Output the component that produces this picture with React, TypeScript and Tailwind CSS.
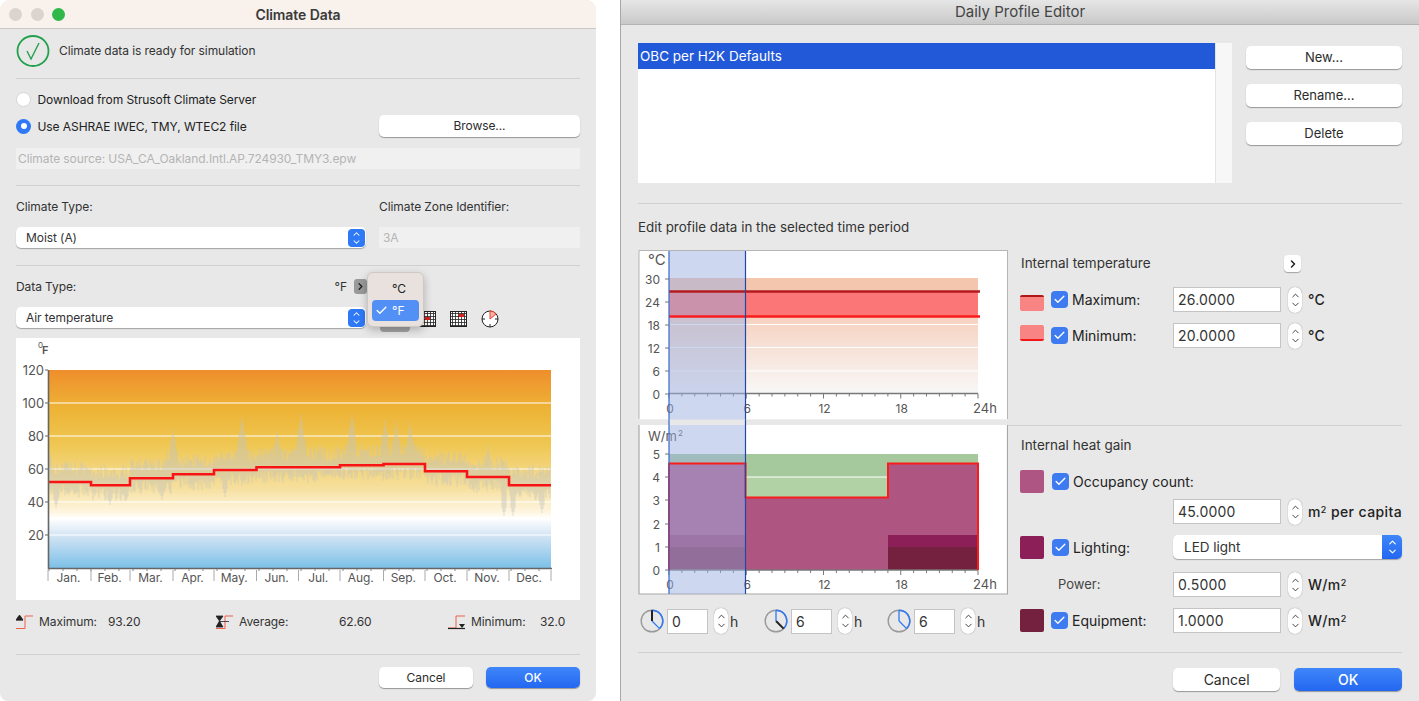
import React from 'react';
import { Check, ChevronRight, ChevronUp, ChevronDown } from 'lucide-react';

const Divider = ({ className = '' }: { className?: string }) => <div className={`h-px bg-[#d0d0d0] ${className}`} />;

const MacButton = ({ label, primary, className = '' }: { label: string; primary?: boolean; className?: string }) => (
  <button
    className={`flex items-center justify-center rounded-[5px] shadow-[0_1px_1px_rgba(0,0,0,0.35)] ${
      primary ? 'bg-gradient-to-b from-[#3f86fa] to-[#2367f0] text-white' : 'bg-white text-[#2b2b2b]'
    } ${className}`}
  >
    {label}
  </button>
);

const Radio = ({ on }: { on?: boolean }) =>
  on ? (
    <span className="flex h-[15px] w-[15px] items-center justify-center rounded-full bg-[#2f78f6]">
      <span className="h-[6px] w-[6px] rounded-full bg-white" />
    </span>
  ) : (
    <span className="h-[15px] w-[15px] rounded-full border border-[#d4d4d4] bg-white" />
  );

const SelectArrow = () => (
  <span className="flex h-[18px] w-[17px] flex-col items-center justify-center rounded-[4px] bg-[#2f78f6] text-white">
    <ChevronUp size={11} strokeWidth={2.5} className="-mb-[1px]" />
    <ChevronDown size={11} strokeWidth={2.5} className="-mt-[1px]" />
  </span>
);

const SmallSelect = ({ label }: { label: string }) => (
  <div className="flex h-[21px] items-center justify-between rounded-[5px] bg-white pl-[10px] pr-[1px] shadow-[0_1px_1px_rgba(0,0,0,0.3)]">
    <span className="text-[12px] text-[#333]">{label}</span>
    <SelectArrow />
  </div>
);

const StatIcon = ({ kind }: { kind: 'max' | 'avg' | 'min' }) => (
  <svg width="23" height="16" viewBox="0 0 23 16" className="shrink-0">
    {kind === 'min' ? (
      <path d="M0 14 H8 V2 H17" fill="none" stroke="#f0604c" strokeWidth="1" />
    ) : (
      <path d="M0 14.5 H9 V2 H17" fill="none" stroke="#f0604c" strokeWidth="1" />
    )}
    {kind === 'max' && <path d="M3 1.5 H4 L7 6 H0 Z M0 6 H7" fill="#222" stroke="#222" strokeWidth="0.8" />}
    {kind === 'avg' && <path d="M0 2 H7 L3.5 7 L7 13 H0 L3.5 7 Z M3 7.5 H13" fill="#222" stroke="#222" strokeWidth="0.8" />}
    {kind === 'min' && (
      <>
        <path d="M0 14.5 H17" stroke="#222" strokeWidth="1.2" />
        <path d="M11 10 H17 L14 14 Z" fill="#222" />
      </>
    )}
  </svg>
);

const Stat = ({ kind, label, value, labelWidth, className }: { kind: 'max' | 'avg' | 'min'; label: string; value: string; labelWidth: string; className: string }) => (
  <div className={`flex items-center text-[12px] text-[#333] ${className}`}>
    <StatIcon kind={kind} />
    <span className={labelWidth}>{label}</span>
    <span>{value}</span>
  </div>
);

const GridIcon = ({ red }: { red: string }) => (
  <svg width="17" height="16" viewBox="0 0 17 16" className="block">
    <rect x="0.5" y="0.5" width="16" height="15" fill="#fff" stroke="#222" />
    {[3, 6, 9, 12, 15].map(v => <path key={v} d={`M0 ${v - 0.5} H17`} stroke="#222" strokeWidth="0.8" />)}
    {[3, 6, 9, 12, 15].map(v => <path key={v} d={`M${v - 0.5} 0 V16`} stroke="#222" strokeWidth="0.8" />)}
    <rect x={red === 'a' ? 9 : 6} y={red === 'a' ? 3 : 6} width="5" height="3" fill="#d82020" />
  </svg>
);

// --- annual temperature chart ---
const monthX = [48, 91, 130, 173, 214, 256.5, 298.5, 340, 383.5, 425, 467, 509, 551];
const monthY = [482, 485.3, 478.3, 474.3, 470, 467.3, 467.3, 465.3, 464, 471.3, 477, 485.3];
const months = ['Jan.', 'Feb.', 'Mar.', 'Apr.', 'May.', 'Jun.', 'Jul.', 'Aug.', 'Sep.', 'Oct.', 'Nov.', 'Dec.'];
const peaksUp = [[173, 429], [242, 417], [301, 414], [352, 414], [385, 420], [396, 422], [410, 422], [277, 432], [488, 445], [320, 445], [167, 452], [50, 452], [140, 460]];
const peaksDown = [[504, 516], [513, 516], [542, 513], [56, 508], [110, 505], [162, 500], [225, 497]];

const noisePath = () => {
  let seed = 1234;
  const rnd = () => {
    seed = (seed * 16807) % 2147483647;
    return seed / 2147483647;
  };
  let d = '';
  for (let x = 49; x < 551; x += 1) {
    const m = monthX.findIndex((v, i) => x >= v && x < monthX[i + 1]);
    const base = monthY[Math.max(m, 0)];
    let top = base - 6 - rnd() * 15;
    let bottom = base + 2 + rnd() * 14;
    peaksUp.forEach(([px, py]) => {
      const k = Math.abs(x - px);
      if (k < 5) top = Math.min(top, py + k * (5 + rnd() * 3));
    });
    peaksDown.forEach(([px, py]) => {
      const k = Math.abs(x - px);
      if (k < 3) bottom = Math.max(bottom, py - k * 4);
    });
    d += `M${x} ${top.toFixed(1)}V${bottom.toFixed(1)}`;
  }
  return d;
};

const stepPath = () =>
  monthY.reduce((d, y, i) => `${d}${i === 0 ? `M49 ${y}` : `V${y}`}H${i === 11 ? 551 : monthX[i + 1]}`, '');

const ClimateChart = () => (
  <svg width="564" height="262" viewBox="16 338 564 262" className="block bg-white">
    <defs>
      <linearGradient id="climate" x1="0" y1="0" x2="0" y2="1">
        <stop offset="0" stopColor="#ef8e2c" />
        <stop offset="0.2" stopColor="#edb436" />
        <stop offset="0.38" stopColor="#efc753" />
        <stop offset="0.6" stopColor="#f6e09f" />
        <stop offset="0.72" stopColor="#fff6e2" />
        <stop offset="0.75" stopColor="#ffffff" />
        <stop offset="0.83" stopColor="#d6e6f4" />
        <stop offset="1" stopColor="#7cc0e8" />
      </linearGradient>
    </defs>
    <rect x="49" y="370" width="502" height="198" fill="url(#climate)" />
    {[403, 436, 469, 502, 535].map(y => <path key={y} d={`M49 ${y} H551`} stroke="#fff" strokeWidth="1.2" />)}
    <path d={noisePath()} stroke="#c6c4c0" strokeWidth="1" opacity="0.55" fill="none" />
    <path d={stepPath()} stroke="#f81414" strokeWidth="2.6" fill="none" />
    <path d="M48.5 370 V568.5 H552" stroke="#666" strokeWidth="1.6" fill="none" />
    {[370, 403, 436, 469, 502, 535].map(y => <path key={y} d={`M45 ${y} H48`} stroke="#666" />)}
    {[['120', 370], ['100', 403], ['80', 436], ['60', 469], ['40', 502], ['20', 535]].map(([t, y]) => (
      <text key={t} x="44" y={Number(y) + 5} textAnchor="end" fontSize="13" fill="#555">{t}</text>
    ))}
    {monthX.map(x => <path key={x} d={`M${x} 570 V581`} stroke="#aaa" />)}
    {monthX.slice(0, 12).map((x, i) => (
      <text key={months[i]} x={(x + monthX[i + 1]) / 2 - 1} y="582" textAnchor="middle" fontSize="12" fill="#555">{months[i]}</text>
    ))}
    {Array.from({ length: 36 }, (_, i) => 49 + i * 14).map(x => <path key={x} d={`M${x} 569 V571`} stroke="#888" />)}
    <text x="38" y="348" fontSize="8" fill="#555">0</text>
    <text x="42" y="354" fontSize="11" fontWeight="600" fill="#555">F</text>
  </svg>
);

// --- daily profile charts ---
const hx = (h: number) => 669 + h * 12.875;

const HourAxis = ({ y }: { y: number }) => (
  <g>
    <path d={`M669 ${y} H978`} stroke="#777" strokeWidth="1.4" />
    {Array.from({ length: 25 }, (_, i) => i).map(h => (
      <path key={h} d={`M${hx(h)} ${y} V${y + (h % 6 === 0 ? 5 : 3)}`} stroke="#777" strokeWidth="1" />
    ))}
    {['0', '6', '12', '18'].map((t, i) => (
      <text key={t} x={hx(i * 6) + 1} y={y + 19} textAnchor="middle" fontSize="12" fill="#555">{t}</text>
    ))}
    <text x="985" y={y + 19} textAnchor="middle" fontSize="13" fill="#555">24h</text>
  </g>
);

const YLabels = ({ items }: { items: [string, number][] }) => (
  <g>
    {items.map(([t, y]) => (
      <g key={t}>
        <text x="660" y={y + 5} textAnchor="end" fontSize="12" fill="#555">{t}</text>
        <path d={`M665 ${y} H669`} stroke="#777" />
      </g>
    ))}
  </g>
);

const ProfileCharts = () => (
  <svg width="370" height="345" viewBox="638 250 370 345" className="block shrink-0">
    <defs>
      <linearGradient id="fade" x1="0" y1="0" x2="0" y2="1">
        <stop offset="0" stopColor="#f6d2c0" />
        <stop offset="1" stopColor="#f8f8f8" />
      </linearGradient>
    </defs>
    {/* temperature frame */}
    <rect x="639" y="250.5" width="368" height="169" fill="#fff" />
    <path d="M639 419 V250.5 H1007.5 V419" fill="none" stroke="#b5b5b5" />
    <rect x="669" y="278" width="309" height="14" fill="#f5c6ae" />
    <rect x="669" y="291" width="309" height="26" fill="#fb7676" />
    <rect x="669" y="317" width="309" height="77" fill="url(#fade)" />
    {[324.5, 347.5, 371].map(y => <path key={y} d={`M669 ${y} H978`} stroke="#fff" strokeWidth="1.2" />)}
    <HourAxis y={393.5} />
    <YLabels items={[['30', 279], ['24', 302], ['18', 325], ['12', 348], ['6', 371], ['0', 394]]} />
    <text x="648" y="265" fontSize="15" fill="#555">°C</text>

    {/* heat gain frame */}
    <rect x="639" y="425" width="368" height="169" fill="#fff" />
    <path d="M639 425 V594 H1007.5 V425" fill="none" stroke="#a8a8a8" strokeWidth="1.2" />
    <rect x="669" y="454" width="309" height="44" fill="#a5c89c" />
    <rect x="746" y="477" width="142" height="21" fill="#b0d2a4" />
    <path d="M746 477 H888" stroke="#fff" strokeWidth="1.2" />
    <path d="M669 463.5 H745.5 V497.5 H888 V463.5 H978 V570 H669 Z" fill="#ae5582" />
    <rect x="669" y="535" width="76" height="35" fill="#8d1f58" opacity="0.45" />
    <rect x="888" y="535" width="90" height="12" fill="#8d1f58" />
    <rect x="888" y="547" width="90" height="23" fill="#74213f" />
    <rect x="669" y="547" width="76" height="23" fill="#74213f" opacity="0.5" />
    <HourAxis y={570} />
    <YLabels items={[['5', 454], ['4', 477], ['3', 500], ['2', 524], ['1', 547], ['0', 570]]} />
    <text x="648" y="441" fontSize="13" fill="#555">W/m</text>
    <text x="678" y="436" fontSize="8" fill="#555">2</text>

    {/* selected period, spans both charts */}
    <rect x="669" y="251" width="76.5" height="343" fill="#9bafdf" opacity="0.5" />
    <path d="M669 291.5 H980" stroke="#b51a1f" strokeWidth="2.4" />
    <path d="M669 316.5 H980" stroke="#fa1c1c" strokeWidth="2.4" />
    <path d="M669 570 V463.5 H745.5 V497.5 H888 V463.5 H978 V570" fill="none" stroke="#f81c1c" strokeWidth="2" />
    <path d="M669 251 V594" stroke="#3a68cc" strokeWidth="1.2" />
    <path d="M745.5 251 V594" stroke="#2147a8" strokeWidth="1.2" />
    <rect x="639" y="419.5" width="369" height="5.5" fill="#e8e8e8" />
    <path d="M669 419.5 V425" stroke="#3a68cc" strokeWidth="1.2" />
    <path d="M745.5 419.5 V425" stroke="#2147a8" strokeWidth="1.2" />
  </svg>
);

const Stepper = () => (
  <span className="flex h-[26px] w-[14px] shrink-0 flex-col items-center justify-center rounded-[7px] bg-white text-[#333] shadow-[0_0_1px_rgba(0,0,0,0.5)]">
    <ChevronUp size={11} strokeWidth={2} className="-mb-[1px]" />
    <ChevronDown size={11} strokeWidth={2} className="-mt-[1px]" />
  </span>
);

const NumInput = ({ value, className = 'w-[108px]' }: { value: string; className?: string }) => (
  <div className={`flex h-[25px] shrink-0 items-center border border-[#c4c4c4] bg-white pl-[4px] text-[14px] tracking-[0.2px] text-[#333] ${className}`}>{value}</div>
);

const CheckBox = () => (
  <span className="flex h-[17px] w-[17px] shrink-0 items-center justify-center rounded-[4px] bg-[#3e7bf0] text-white">
    <Check size={13} strokeWidth={2.5} />
  </span>
);

const Sup2 = () => <sup className="text-[9px]">2</sup>;

const Clock = ({ black }: { black: 'up' | 'down' | 'none' }) => (
  <svg width="24" height="24" viewBox="-12 -12 24 24" className="shrink-0">
    <circle r="10.8" fill="none" stroke="#9a9a9a" strokeWidth="1.4" />
    <path d="M0 -10.8 A10.8 10.8 0 0 1 7.6 7.6" fill="none" stroke="#2f78f6" strokeWidth="1.4" />
    <path d="M0 0 L7.6 7.6" stroke={black === 'down' ? '#222' : '#2f78f6'} strokeWidth={black === 'down' ? 2 : 1.3} />
    <path d="M0 0 V-10.8" stroke={black === 'up' ? '#222' : '#2f78f6'} strokeWidth={black === 'up' ? 2 : 1.3} />
  </svg>
);

const ClockField = ({ black, value, className }: { black: 'up' | 'down' | 'none'; value: string; className: string }) => (
  <div className={`flex items-center ${className}`}>
    <Clock black={black} />
    <NumInput value={value} className="ml-[3px] w-[41px]" />
    <span className="ml-[6px]"><Stepper /></span>
    <span className="ml-[2px] text-[14px] text-[#333]">h</span>
  </div>
);

const Swatch = ({ className }: { className: string }) => <span className={`w-[24px] shrink-0 rounded-[2px] ${className}`} />;

const UNIT = 'ml-[6px] whitespace-nowrap text-[14px] font-medium tracking-[0.4px] text-[#222]';

const ProfileRow = ({ swatch, label, value, unit }: { swatch: React.ReactNode; label: string; value: string; unit: React.ReactNode }) => (
  <div className="flex h-[25px] items-center">
    {swatch}
    <span className="ml-[7px]"><CheckBox /></span>
    <span className="ml-[4px] w-[101px] text-[14px] text-[#222]">{label}</span>
    <NumInput value={value} />
    <span className="ml-[7px]"><Stepper /></span>
    <span className={UNIT}>{unit}</span>
  </div>
);

const ClimateWindow = () => (
  <div className="relative h-[701px] w-[596px] shrink-0 overflow-hidden rounded-t-[10px] rounded-b-[8px] bg-[#e8e8e8] tracking-[-0.08px]">
    <div className="grid h-[29px] grid-cols-[1fr_auto_1fr] items-center border-b border-[#c9c9c9] bg-[#f8f1ec]">
      <div className="flex items-center gap-[8.5px] pl-[9px]">
        <span className="h-[13px] w-[13px] rounded-full bg-[#d9d4cd]" />
        <span className="h-[13px] w-[13px] rounded-full bg-[#d9d4cd]" />
        <span className="h-[13px] w-[13px] rounded-full bg-[#2fb94a]" />
      </div>
      <span className="text-[14px] font-semibold text-[#3a3a3a]">Climate Data</span>
      <span />
    </div>

    <div className="px-4">
      <div className="flex h-[49px] items-start pt-[6px]">
        <svg width="34" height="32" viewBox="0 0 34 32">
          <ellipse cx="17" cy="16" rx="15.5" ry="15" fill="none" stroke="#22a04c" strokeWidth="1.8" />
          <path d="M11 16 L15 24 L23 8" fill="none" stroke="#22a04c" strokeWidth="1.4" />
        </svg>
        <span className="ml-[9px] mt-[7px] text-[12px] text-[#333]">Climate data is ready for simulation</span>
      </div>
      <Divider />

      <div className="mt-[10px] flex h-[21px] items-center gap-[6.5px] text-[12px] text-[#222]">
        <Radio />
        <span>Download from Strusoft Climate Server</span>
      </div>
      <div className="mt-[5px] flex h-[22px] items-center gap-[6.5px] text-[12px] text-[#222]">
        <Radio on />
        <span className="pt-[1px]">Use ASHRAE IWEC, TMY, WTEC2 file</span>
        <MacButton label="Browse..." className="ml-auto h-[22px] w-[201px] text-[12px]" />
      </div>
      <div className="mt-[11px] flex h-[21px] items-center bg-[#f0f0f0] pl-[2px] text-[12px] text-[#b4b4b4]">
        Climate source: USA_CA_Oakland.Intl.AP.724930_TMY3.epw
      </div>
      <Divider className="mt-[16px]" />

      <div className="mt-[13px] grid grid-cols-[350px_201px] gap-x-[13px] text-[12px] text-[#333]">
        <span className="h-4 leading-4">Climate Type:</span>
        <span className="h-4 leading-4">Climate Zone Identifier:</span>
        <div className="mt-[12px]"><SmallSelect label="Moist (A)" /></div>
        <div className="mt-[12px] flex h-[21px] items-center bg-[#f0f0f0] pl-[4px] text-[#b4b4b4]">3A</div>
      </div>
      <Divider className="mt-[17px]" />

      <div className="mt-[13px] w-[351px]">
        <div className="flex h-[15px] items-center text-[12px] text-[#333]">
          <span>Data Type:</span>
          <span className="ml-auto mr-[7px]">°F</span>
          <span className="flex h-[15px] w-[13px] items-center justify-center rounded-[3px] bg-[#9a9a9a] text-[#222]">
            <ChevronRight size={11} strokeWidth={3} />
          </span>
        </div>
      </div>
      <div className="mt-[13px] flex h-[21px]">
        <div className="w-[350px]"><SmallSelect label="Air temperature" /></div>
        <div className="flex h-[21px] items-center gap-[13px] pl-[84px] pt-[2px]">
          <GridIcon red="a" />
          <svg width="20" height="20" viewBox="-10 -10 20 20">
            <circle r="8" fill="#fff" stroke="#222" />
            <path d="M0 0 V-8 A8 8 0 0 1 6 -5 Z" fill="#f8b4a8" stroke="#e8402c" />
            <path d="M0 8 V5 M-8 0 H-5 M8 0 H5" stroke="#222" />
          </svg>
        </div>
      </div>

      <div className="mt-[10px]"><ClimateChart /></div>

      <div className="mt-[12px] flex h-5 items-center">
        <Stat kind="max" label="Maximum:" value="93.20" labelWidth="w-[69px]" className="w-[200px]" />
        <Stat kind="avg" label="Average:" value="62.60" labelWidth="w-[100px]" className="w-[233px]" />
        <Stat kind="min" label="Minimum:" value="32.0" labelWidth="w-[69px]" className="-ml-px" />
      </div>
      <Divider className="mt-[22px]" />
      <div className="mt-[12px] flex justify-end gap-[13px]">
        <MacButton label="Cancel" className="h-[21px] w-[94px] text-[12px]" />
        <MacButton label="OK" primary className="h-[21px] w-[94px] text-[12px] font-medium" />
      </div>
    </div>

    {/* open unit menu */}
    <div className="absolute left-[380px] top-[318px] h-[14px] w-[30px] rounded-[4px] bg-[#a4a4a4]" />
    <div className="absolute left-[419px] top-[311px]"><GridIcon red="b" /></div>
    <div className="absolute left-[367px] top-[272px] h-[55px] w-[57px] rounded-[6px] border border-[#cfc9c5] bg-[#e8e1dd] shadow-[0_3px_8px_rgba(0,0,0,0.25)]">
      <div className="mt-[8px] h-4 pl-[24px] text-[12px] leading-4 text-[#222]">°C</div>
      <div className="absolute left-[4px] top-[27px] flex h-[21px] w-[47px] items-center rounded-[4px] bg-[#5290f5] pl-[3px] text-[12px] text-white">
        <Check size={13} strokeWidth={2.5} />
        <span className="ml-[4px]">°F</span>
      </div>
    </div>
  </div>
);

const ProfileWindow = () => (
  <div className="h-[701px] flex-1 border-l border-[#a8a8a8] bg-[#e8e8e8]">
    <div className="flex h-[25px] items-center justify-center border-b border-[#b4b4b4] bg-gradient-to-b from-[#e6e6e6] to-[#c9c9c9] text-[15px] text-[#444]">
      Daily Profile Editor
    </div>
    <div className="pl-[17px] pr-[17px]">
      <div className="mt-[18px] flex">
        <div className="flex h-[140px] w-[594px] bg-white">
          <div className="h-[26px] w-[577px] bg-[#2259d9] pl-[2px] text-[13.5px] leading-[26px] text-white">OBC per H2K Defaults</div>
          <div className="ml-auto h-full w-[17px] border-l border-[#e4e4e4] bg-[#f7f7f7]" />
        </div>
        <div className="ml-[14px] flex w-[156px] flex-col gap-[15px] pt-[3px] text-[13px]">
          <MacButton label="New..." className="h-[23px]" />
          <MacButton label="Rename..." className="h-[23px]" />
          <MacButton label="Delete" className="h-[23px]" />
        </div>
      </div>
      <Divider className="mt-[20px]" />
      <div className="mt-[15px] h-4 text-[13.4px] leading-4 text-[#333]">Edit profile data in the selected time period</div>

      <div className="mt-[15px] flex">
        <div className="w-[370px] shrink-0">
          <ProfileCharts />
          <div className="mt-[13px] flex">
            <ClockField black="up" value="0" className="ml-[2px] w-[124px]" />
            <ClockField black="down" value="6" className="w-[123px]" />
            <ClockField black="none" value="6" className="" />
          </div>
        </div>

        <div className="flex-1">
          <div className="pl-3">
            <div className="mt-[5px] flex h-[17px] items-center">
              <span className="w-[264px] pl-px text-[13.5px] text-[#333]">Internal temperature</span>
              <span className="flex h-[17px] w-[17px] items-center justify-center rounded-[4px] bg-white text-[#222] shadow-[0_1px_1px_rgba(0,0,0,0.3)]">
                <ChevronRight size={12} strokeWidth={3} />
              </span>
            </div>
            <div className="mt-[15px]">
              <ProfileRow
                swatch={<Swatch className="mt-[7px] h-[16px] border-t-2 border-[#b01818] bg-[#f98484]" />}
                label="Maximum:"
                value="26.0000"
                unit="°C"
              />
            </div>
            <div className="mt-[11px]">
              <ProfileRow
                swatch={<Swatch className="-mt-[5px] h-[16px] border-b-2 border-[#f01818] bg-[#f98484]" />}
                label="Minimum:"
                value="20.0000"
                unit="°C"
              />
            </div>
          </div>
          <Divider className="mt-[77px]" />
          <div className="pl-3">
            <div className="mt-[11px] h-[16px] pl-px text-[13.5px] leading-4 text-[#333]">Internal heat gain</div>
            <div className="mt-[16px] flex h-[25px] items-center">
              <Swatch className="h-[23px] bg-[#ae5583]" />
              <span className="ml-[8px]"><CheckBox /></span>
              <span className="ml-[4px] text-[14px] text-[#222]">Occupancy count:</span>
            </div>
            <div className="mt-[5px] flex h-[25px] items-center pl-[153px]">
              <NumInput value="45.0000" />
              <span className="ml-[7px]"><Stepper /></span>
              <span className={UNIT}>m<Sup2 /> per capita</span>
            </div>
            <div className="mt-[11px] flex h-[24px] items-center">
              <Swatch className="h-[23px] bg-[#8d1f58]" />
              <span className="ml-[8px]"><CheckBox /></span>
              <span className="ml-[4px] w-[100px] text-[14px] text-[#222]">Lighting:</span>
              <div className="flex h-[24px] w-[229px] items-center overflow-hidden rounded-[5px] bg-white pl-[11px] text-[13.5px] text-[#333] shadow-[0_1px_1px_rgba(0,0,0,0.3)]">
                LED light
                <span className="ml-auto flex h-full w-[20px] flex-col items-center justify-center bg-gradient-to-b from-[#3f86fa] to-[#2367f0] text-white">
                  <ChevronUp size={11} strokeWidth={2.5} className="-mb-[1px]" />
                  <ChevronDown size={11} strokeWidth={2.5} className="-mt-[1px]" />
                </span>
              </div>
            </div>
            <div className="mt-[13px] flex h-[25px] items-center">
              <span className="ml-[38px] w-[115px] text-[13px] text-[#444]">Power:</span>
              <NumInput value="0.5000" />
              <span className="ml-[7px]"><Stepper /></span>
              <span className={UNIT}>W/m<Sup2 /></span>
            </div>
            <div className="mt-[11px]">
              <ProfileRow swatch={<Swatch className="h-[23px] bg-[#74213f]" />} label="Equipment:" value="1.0000" unit={<>W/m<Sup2 /></>} />
            </div>
          </div>
        </div>
      </div>

      <Divider className="mt-[18px]" />
      <div className="mt-[15px] flex justify-end gap-[14px]">
        <MacButton label="Cancel" className="h-[23px] w-[107px] text-[14px]" />
        <MacButton label="OK" primary className="h-[23px] w-[108px] text-[14px] font-medium" />
      </div>
    </div>
  </div>
);

export default function App() {
  return (
    <div className="flex h-[701px] w-[1419px] gap-[24px] overflow-hidden bg-white [font-family:Inter,sans-serif]">
      <ClimateWindow />
      <ProfileWindow />
    </div>
  );
}
